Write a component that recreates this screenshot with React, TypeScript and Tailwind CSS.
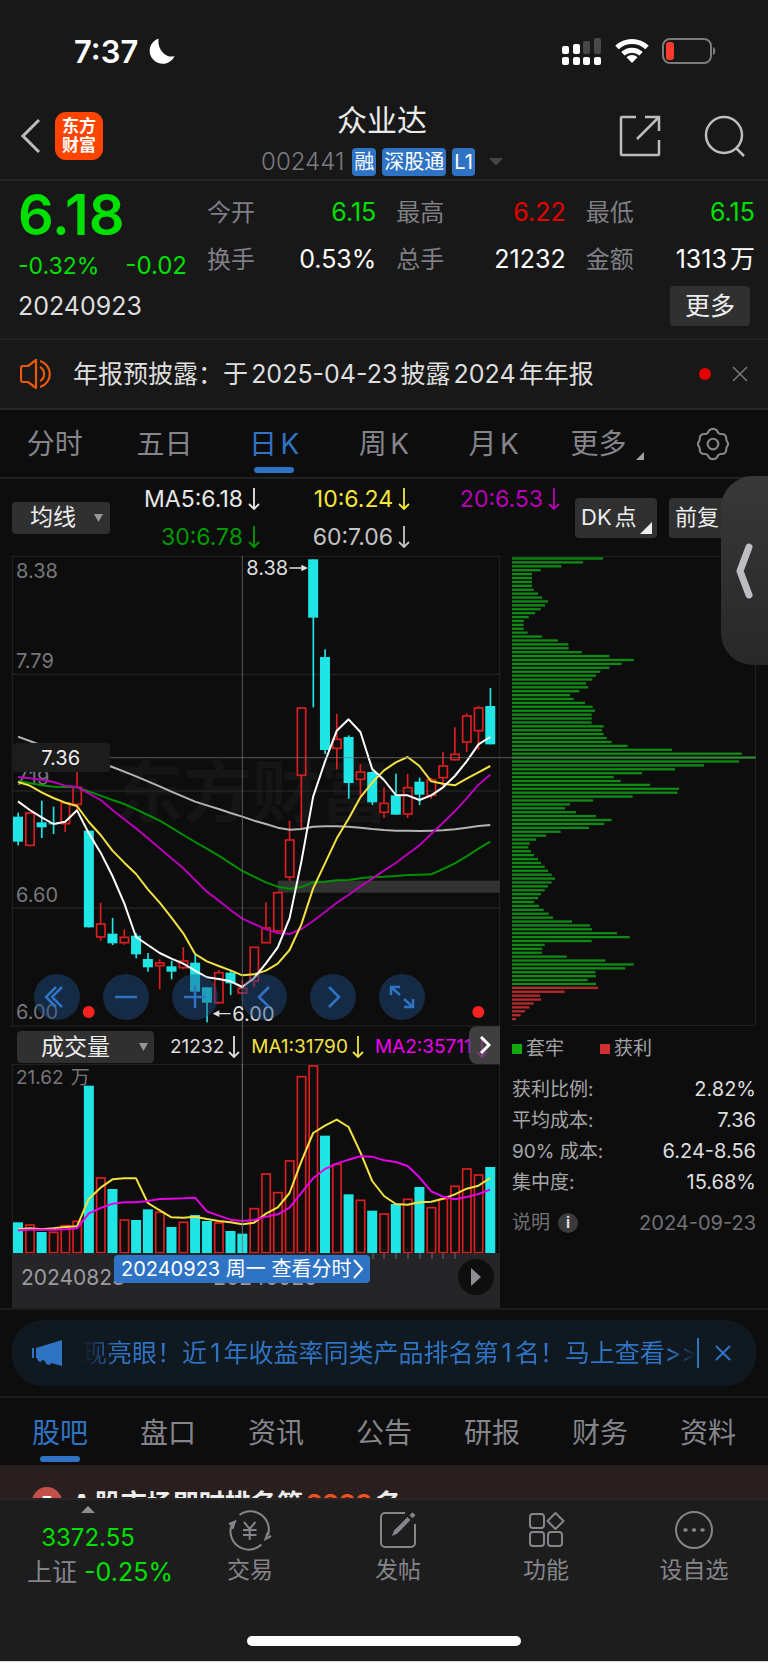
import type { ReactNode } from "react";

// [high, bodyTop, bodyBottom, low, rising]
type Candle = [number, number, number, number, 0 | 1];

const FIRST_X = 54;
const STEP = 35.42;

const candles: Candle[] = [
    [788, 800, 875, 886, 0], [786, 787, 888, 889, 1], [752, 817, 832, 864, 0], [770, 820, 823, 852, 0],
    [757, 757, 823, 846, 1], [640, 710, 765, 780, 1], [842, 842, 1132, 1132, 0], [1058, 1120, 1163, 1172, 1],
    [1104, 1151, 1180, 1185, 0], [1138, 1160, 1180, 1184, 1], [1150, 1157, 1213, 1225, 0], [1209, 1227, 1252, 1265, 0],
    [1228, 1237, 1249, 1318, 1], [1232, 1249, 1265, 1288, 0], [1192, 1231, 1255, 1258, 1], [1215, 1238, 1325, 1330, 0],
    [1312, 1312, 1358, 1417, 0], [1260, 1266, 1360, 1362, 1], [1262, 1268, 1300, 1335, 0], [1290, 1313, 1331, 1333, 1],
    [1190, 1190, 1295, 1312, 1], [1057, 1132, 1180, 1180, 1], [1026, 1026, 1145, 1145, 1], [812, 868, 983, 992, 1],
    [472, 472, 678, 835, 1], [28, 28, 203, 472, 0], [298, 321, 600, 612, 0], [491, 566, 597, 658, 1],
    [556, 561, 699, 746, 0], [642, 664, 690, 738, 1], [664, 666, 757, 765, 0], [712, 758, 789, 804, 1],
    [671, 736, 794, 794, 0], [671, 711, 794, 804, 1], [683, 695, 734, 765, 0], [684, 688, 738, 746, 1],
    [606, 646, 685, 710, 1], [532, 611, 631, 632, 1], [490, 496, 578, 606, 1], [467, 472, 544, 600, 1],
    [414, 468, 583, 583, 0],
];

const ma5 = [754, 780, 802, 822, 815, 781, 850, 908, 978, 1060, 1161, 1185, 1209, 1226, 1241, 1262, 1282, 1287, 1294, 1311, 1284, 1240, 1192, 1105, 935, 740, 635, 542, 508, 546, 657, 690, 735, 736, 750, 736, 712, 678, 634, 583, 561];
const ma10 = [696, 707, 727, 744, 758, 768, 816, 855, 902, 938, 972, 1018, 1058, 1103, 1150, 1212, 1234, 1248, 1261, 1276, 1273, 1262, 1241, 1200, 1123, 1015, 940, 865, 806, 742, 698, 661, 637, 621, 648, 694, 701, 706, 686, 667, 648];
const ma20 = [681, 685, 689, 696, 707, 711, 730, 750, 780, 808, 835, 865, 895, 925, 955, 990, 1025, 1052, 1080, 1106, 1122, 1138, 1149, 1152, 1137, 1113, 1086, 1058, 1035, 1009, 986, 962, 939, 912, 886, 852, 818, 784, 745, 704, 674];
const ma30 = [694, 699, 706, 710, 711, 712, 724, 737, 750, 762, 778, 795, 812, 833, 855, 876, 896, 917, 940, 963, 980, 997, 1010, 1016, 1011, 997, 995, 991, 990, 985, 981, 980, 978, 975, 974, 973, 957, 940, 919, 896, 875];
const ma60 = [560, 573, 586, 597, 608, 618, 629, 640, 651, 665, 679, 694, 709, 725, 740, 755, 766, 777, 789, 800, 812, 822, 833, 839, 837, 830, 829, 829, 830, 833, 837, 840, 842, 842, 843, 842, 841, 838, 833, 828, 825];

// top of each volume bar, same order as the candles
const volumes = [608, 614, 637, 636, 616, 603, 198, 473, 508, 599, 601, 569, 576, 622, 606, 586, 604, 608, 634, 642, 565, 461, 517, 422, 169, 137, 348, 432, 524, 540, 573, 581, 553, 537, 502, 562, 537, 498, 446, 464, 442];
const fallingVolumes = [0, 2, 6, 8, 10, 11, 13, 15, 16, 18, 19, 26, 28, 30, 32, 34, 40];
const volMa1 = [629, 626, 629, 626, 622, 620, 537, 504, 479, 476, 476, 550, 572, 593, 594, 591, 598, 604, 608, 614, 609, 582, 563, 520, 425, 340, 318, 300, 322, 398, 484, 529, 553, 555, 548, 546, 537, 524, 507, 498, 475];
const volMa2 = [632, 630, 630, 630, 629, 626, 581, 565, 552, 548, 548, 544, 538, 537, 536, 534, 575, 588, 600, 604, 601, 591, 584, 564, 520, 476, 448, 432, 420, 410, 411, 422, 427, 439, 473, 515, 531, 539, 532, 523, 510];

const chips = [
    309, 249, 184, 122, 96, 96, 96, 96, 101, 114, 126, 144, 135, 122, 105, 86, 71, 71, 71, 83,
    126, 174, 205, 206, 245, 328, 401, 365, 328, 301, 288, 277, 258, 264, 238, 210, 221, 255, 278, 285,
    275, 275, 275, 311, 306, 311, 320, 335, 383, 516, 725, 767, 717, 612, 525, 426, 341, 362, 450, 537,
    532, 398, 279, 210, 195, 228, 288, 335, 313, 267, 182, 138, 108, 89, 85, 93, 102, 114, 123, 134,
    144, 155, 165, 155, 144, 134, 123, 114, 102, 117, 131, 146, 159, 216, 270, 276, 351, 389, 275, 134,
    126, 126, 200, 316, 401, 376, 286, 288, 263, 288, 294, 194, 120, 123, 101, 88, 75, 62, 48,
];
const FIRST_PROFIT_CHIP = 110;

const xAt = (i: number) => FIRST_X + i * STEP;
const toPoints = (ys: number[]) => ys.map((y, i) => `${xAt(i)},${y}`).join(" ");

const Line = ({ ys, color }: { ys: number[]; color: string }) => (
    <polyline points={toPoints(ys)} fill="none" stroke={color} strokeWidth="6" strokeLinejoin="round" />
);

const StatusBar = () => (
    <div className="flex h-24 items-center justify-between pl-[74px] pr-[52px]">
        <div className="flex items-center gap-[10px] pt-[7px]">
            <span className="text-[31px] leading-8 font-semibold text-white">7:37</span>
            <svg className="h-7 w-7" viewBox="0 0 28 28" fill="#fff">
                <path d="M10.500 .5A13 13 0 1 0 26.600 18 10.600 10.600 0 0 1 14.200 13.800C11.200 10.500 10 5.500 10.500 .5Z" />
            </svg>
        </div>
        <div className="flex items-center gap-[13px] pt-[6px]">
            <svg className="h-7 w-10" viewBox="0 0 40 28" fill="#fff">
                <rect x="0" y="9" width="7" height="8" rx="2" />
                <rect x="11" y="7" width="7" height="10" rx="2" />
                <rect x="21" y="4" width="7" height="13" rx="2" fill="#48484a" />
                <rect x="32" y="1" width="7" height="16" rx="2" fill="#48484a" />
                <rect x="0" y="20" width="7" height="8" rx="2" />
                <rect x="11" y="20" width="7" height="8" rx="2" />
                <rect x="21" y="20" width="7" height="8" rx="2" />
                <rect x="32" y="20" width="7" height="8" rx="2" />
            </svg>
            <svg className="h-7 w-[34px]" viewBox="0 0 34 28" fill="none" stroke="#fff" strokeWidth="5">
                <path d="M2 10.500A21.500 21.500 0 0 1 32 10.500" />
                <path d="M8 16.800A13 13 0 0 1 26 16.800" />
                <path d="M17 26 11.500 20.200A8 8 0 0 1 22.500 20.200Z" fill="#fff" stroke="none" />
            </svg>
            <svg className="h-7 w-[54px]" viewBox="0 0 54 28">
                <rect x="1" y="2" width="48" height="24" rx="7" fill="none" stroke="#7b7b7d" strokeWidth="2" />
                <rect x="4" y="5" width="8" height="18" rx="3" fill="#ff3b30" />
                <path d="M51 10v8c3-1 3-7 0-8Z" fill="#7b7b7d" />
            </svg>
        </div>
    </div>
);

const Tag = ({ children }: { children: ReactNode }) => (
    <span className="rounded bg-[#2f74c4] px-[2px] text-[20px] leading-7 text-white">{children}</span>
);

const Header = () => (
    <header className="flex h-[85px] items-center justify-between border-b-2 border-[#262626] pr-[22px] pl-[20px]">
        <div className="flex w-[125px] items-center gap-[14px] pb-1">
            <button type="button" aria-label="返回">
                <svg className="h-9 w-[21px]" viewBox="0 0 21 36" fill="none" stroke="#bdbdbd" strokeWidth="3">
                    <path d="M19 2 3 18 19 34" />
                </svg>
            </button>
            <div className="grid h-12 w-12 place-content-center rounded-[11px] bg-[#ff4400] text-center text-[17px] leading-[19px] font-bold text-white">
                <span>东方</span>
                <span>财富</span>
            </div>
        </div>
        <div className="text-center">
            <h1 className="text-[30px] leading-[48px] text-[#ebebeb]">众业达</h1>
            <div className="flex items-center gap-[6px] py-1">
                <span className="mr-[2px] text-[24px] leading-7 font-light text-[#7b7b82]">002441</span>
                <Tag>融</Tag>
                <Tag>深股通</Tag>
                <Tag>L1</Tag>
                <svg className="ml-2 h-2 w-[14px]" viewBox="0 0 14 8" fill="#444">
                    <path d="M0 0h14L7 8Z" />
                </svg>
            </div>
        </div>
        <div className="flex w-[127px] justify-between pb-1">
            <button type="button" aria-label="分享">
                <svg className="h-[42px] w-[42px]" viewBox="0 0 42 42" fill="none" stroke="#bdbdbd" strokeWidth="2.500">
                    <path d="M17 2H3a1 1 0 0 0-1 1v36a1 1 0 0 0 1 1h36a1 1 0 0 0 1-1V25" />
                    <path d="M26 2h14v14M40 2 18 24" />
                </svg>
            </button>
            <button type="button" aria-label="搜索">
                <svg className="h-[42px] w-[42px]" viewBox="0 0 42 42" fill="none" stroke="#bdbdbd" strokeWidth="2.500">
                    <circle cx="20" cy="20" r="18" />
                    <path d="m32 33 8 8" />
                </svg>
            </button>
        </div>
    </header>
);

const quoteItems = [
    { label: "今开", value: "6.15", color: "text-[#00e000]" },
    { label: "最高", value: "6.22", color: "text-[#e60000]" },
    { label: "最低", value: "6.15", color: "text-[#00e000]" },
    { label: "换手", value: "0.53%", color: "text-white" },
    { label: "总手", value: "21232", color: "text-white" },
    { label: "金额", value: "1313万", color: "text-white" },
];

const Quote = () => (
    <section className="border-b-2 border-[#202020] pr-[13px] pb-3 pl-[18px]">
        <div className="flex">
            <div className="w-[189px] shrink-0 text-[#00e000]">
                <div className="text-[56px] leading-[68px] font-semibold">6.18</div>
                <div className="flex items-center justify-between pr-5 leading-[34px]">
                    <span className="text-[23px]">-0.32%</span>
                    <span className="text-[24px]">-0.02</span>
                </div>
            </div>
            <dl className="grid grow grid-cols-3 gap-x-5 pt-2 text-[24px] leading-[47px]">
                {quoteItems.map((item) => (
                    <div key={item.label} className="flex justify-between">
                        <dt className="text-[#7f7f85]">{item.label}</dt>
                        <dd className={`text-[25px] ${item.color}`}>{item.value}</dd>
                    </div>
                ))}
            </dl>
        </div>
        <div className="flex items-center justify-between pt-[3px] pr-[5px]">
            <span className="text-[25px] leading-10 text-[#dedede]">20240923</span>
            <button type="button" className="h-10 w-20 rounded bg-[#303031] text-[25px] leading-10 text-[#ededed]">
                更多
            </button>
        </div>
    </section>
);

const Notice = () => (
    <section className="flex h-[70px] items-center border-b-2 border-[#262626] pr-5 pl-5">
        <svg className="mr-[19px] h-8 w-[34px] shrink-0" viewBox="0 0 34 32" fill="none" stroke="#e8590c" strokeWidth="2.200">
            <path d="M3 8h5l8-6v28l-8-6H3a2 2 0 0 1-2-2V10a2 2 0 0 1 2-2Z" strokeLinejoin="round" />
            <path d="M20 9a8 8 0 0 1 0 14M20 3a13.500 13.500 0 0 1 0 26" />
        </svg>
        <p className="grow truncate text-[25px] leading-9 text-[#dedede]">年报预披露：于2025-04-23披露2024年年报</p>
        <span className="mr-[21px] h-3 w-3 shrink-0 rounded-full bg-[#e60000]" />
        <button type="button" aria-label="关闭">
            <svg className="h-4 w-4" viewBox="0 0 16 16" stroke="#77777c" strokeWidth="1.500">
                <path d="m1 1 14 14M15 1 1 15" />
            </svg>
        </button>
    </section>
);

const periods = ["分时", "五日", "日K", "周K", "月K"];

const PeriodTabs = () => (
    <nav className="grid h-[69px] grid-cols-7 border-b-2 border-[#222] text-[28px] text-[#85858b]">
        {periods.map((name) => (
            <button
                key={name}
                type="button"
                className={`flex flex-col items-center pt-3 leading-[45px] ${name === "日K" ? "text-[#2f74c4]" : ""}`}
            >
                {name}
                {name === "日K" && <span className="h-[6px] w-10 rounded-full bg-[#2f74c4]" />}
            </button>
        ))}
        <button type="button" className="flex items-start justify-center gap-[10px] pt-3 pl-2 leading-[45px]">
            更多
            <svg className="mt-[30px] h-2 w-2" viewBox="0 0 8 8" fill="#a0a0a5">
                <path d="M8 0v8H0Z" />
            </svg>
        </button>
        <button type="button" aria-label="设置" className="grid place-items-center">
            <svg className="h-[34px] w-[34px]" viewBox="0 0 32 32" fill="none" stroke="#85858b" strokeWidth="2">
                <path
                    strokeLinejoin="round"
                    d="M12.500 3Q16 .5 19.500 3L21 5.500Q22 6.800 24 6.600 28 6.500 28.500 10.500 28.300 12.300 29.200 13.500 31.200 16 29.200 18.500 28.300 19.700 28.500 21.500 28 25.500 24 25.400 22 25.200 21 26.500L19.500 29Q16 31.500 12.500 29L11 26.500Q10 25.200 8 25.400 4 25.500 3.500 21.500 3.700 19.700 2.800 18.500 .8 16 2.800 13.500 3.700 12.300 3.500 10.500 4 6.500 8 6.600 10 6.800 11 5.500Z"
                />
                <circle cx="16" cy="16" r="5" />
            </svg>
        </button>
    </nav>
);

const DownArrow = () => (
    <svg className="inline-block h-[22px] w-3" viewBox="0 0 12 22" fill="none" stroke="currentColor" strokeWidth="1.800">
        <path d="M6 0v21M1 16l5 5 5-5" />
    </svg>
);

const SmallTriangle = () => (
    <svg className="h-2 w-[9px]" viewBox="0 0 9 8" fill="#97979b">
        <path d="M0 0h9L4.500 8Z" />
    </svg>
);

const averages = [
    { text: "MA5:6.18", color: "text-[#e8e8e8]" },
    { text: "10:6.24", color: "text-[#f5e63c]" },
    { text: "20:6.53", color: "text-[#b800b8]" },
    { text: "30:6.78", color: "text-[#009a00]" },
    { text: "60:7.06", color: "text-[#c4c4c4]" },
];

const AverageBar = () => (
    <div className="relative flex h-[77px] items-center pl-3">
        <button type="button" className="flex h-8 w-[98px] items-center justify-between rounded bg-[#303031] pr-[7px] pl-[18px] text-[23px] text-[#ededed]">
            均线
            <SmallTriangle />
        </button>
        <div className="grid w-[450px] grid-cols-3 text-[23px] leading-[38px]">
            {averages.map((item) => (
                <span key={item.text} className={`flex items-center justify-end gap-[5px] ${item.color}`}>
                    {item.text}
                    <DownArrow />
                </span>
            ))}
        </div>
        <button type="button" className="relative ml-[15px] h-10 w-[82px] rounded bg-[#303031] pl-[6px] text-left text-[22px] text-[#ededed]">
            DK点
            <svg className="absolute right-[5px] bottom-[4px] h-3 w-3" viewBox="0 0 12 12" fill="#ededed">
                <path d="M12 0v12H0Z" />
            </svg>
        </button>
        <button type="button" className="ml-3 h-10 grow rounded bg-[#303031] pl-[6px] text-left text-[22px] text-[#ededed]">
            前复
        </button>
        <button
            type="button"
            aria-label="展开侧栏"
            className="absolute top-[-3px] right-0 z-20 grid h-[189px] w-[47px] place-items-center rounded-l-[32px] bg-gradient-to-b from-[#383838] to-[#282828]"
        >
            <svg className="h-14 w-6" viewBox="0 0 24 56" fill="none" stroke="#bdbdc2" strokeWidth="7" strokeLinecap="round" strokeLinejoin="round">
                <path d="M16 4 7 28l9 24" />
            </svg>
        </button>
    </div>
);

const axisLabels = [
    { y: 83, text: "8.38" },
    { y: 353, text: "7.79" },
    { y: 705, text: "7.19" },
    { y: 1056, text: "6.60" },
    { y: 1408, text: "6.00" },
];

const CandleChart = () => (
    <svg className="pointer-events-none relative z-10 block w-full overflow-visible" viewBox="36 18 1464 1410">
        <text x="345" y="800" fontSize="205" fontWeight="700" fill="#151515">东方财富</text>
        <path d="M37 373H1500M37 723H1500M37 1074H1500" stroke="#222" strokeWidth="4" />
        <rect x="37" y="19" width="1462" height="1409" fill="none" stroke="#242424" strokeWidth="3" />
        <rect x="833" y="992" width="666" height="36" fill="#333" />
        <g fontSize="60" fill="#77777b">
            {axisLabels.map((label) => (
                <text key={label.text} x="48" y={label.y}>{label.text}</text>
            ))}
        </g>
        {candles.map(([high, top, bottom, low, rising], i) =>
            rising ? (
                <g key={i} fill="none" stroke="#dc1e1e" strokeWidth="5">
                    <path d={`M${xAt(i)} ${high}V${top}M${xAt(i)} ${bottom}V${low}`} />
                    <rect x={xAt(i) - 12} y={top + 2} width="25" height={Math.max(bottom - top - 4, 4)} />
                </g>
            ) : (
                <g key={i} fill="#20e5e5">
                    <rect x={xAt(i) - 2} y={high} width="5" height={low - high} />
                    <rect x={xAt(i) - 15} y={top} width="30" height={bottom - top} />
                </g>
            )
        )}
        <Line ys={ma60} color="#b4b4b4" />
        <Line ys={ma30} color="#008f00" />
        <Line ys={ma20} color="#b800b8" />
        <Line ys={ma10} color="#f2e240" />
        <Line ys={ma5} color="#fff" />
        <path d="M727 18V1542M36 623H1536" stroke="#77777b" strokeWidth="3" strokeOpacity="0.700" />
        <rect x="38" y="579" width="292" height="87" rx="10" fill="#1c1c1d" />
        <text x="182" y="645" fontSize="60" fill="#ededed" textAnchor="middle">7.36</text>
        <g fontSize="60" fill="#dedede">
            <text x="739" y="76">8.38</text>
            <path d="M868 52h36v-8l20 10-20 10v-8h-36Z" />
            <text x="697" y="1412">6.00</text>
            <path d="M692 1389h-34v-8l-20 10 20 10v-8h34Z" />
        </g>
        <circle cx="266" cy="1386" r="18" fill="#f52222" />
        <circle cx="1435" cy="1386" r="18" fill="#f52222" />
    </svg>
);

const controls = [
    { label: "最早", path: "M22 13 12 23l10 10M28 13 18 23l10 10" },
    { label: "缩小", path: "M12 23h22" },
    { label: "放大", path: "M12 23h22M23 12v22" },
    { label: "左移", path: "M28 13 18 23l10 10" },
    { label: "右移", path: "M19 13l10 10-10 10" },
    { label: "全屏", path: "M12 21v-8h9M12 13l9 8M34 25v8h-9M34 33l-9-8" },
];

const ChartControls = () => (
    <div className="absolute bottom-[6px] left-[22px] z-20 flex gap-[23px]">
        {controls.map((item) => (
            <button key={item.label} type="button" aria-label={item.label} className="h-[46px] w-[46px] rounded-full bg-[#1e4e87]/45">
                <svg viewBox="0 0 46 46" fill="none" stroke="#2f74c4" strokeWidth="2.500">
                    <path d={item.path} />
                </svg>
            </button>
        ))}
    </div>
);

const VolumeBar = () => (
    <div className="relative flex h-[38px] items-center overflow-hidden pt-1 pl-[5px] text-[19px] whitespace-nowrap">
        <button type="button" className="mr-4 flex h-8 w-[137px] shrink-0 items-center justify-between rounded bg-[#303031] pr-[6px] pl-6 text-[23px] text-[#ededed]">
            成交量
            <SmallTriangle />
        </button>
        <span className="mr-[11px] flex items-center gap-1 text-[#dedede]">21232<DownArrow /></span>
        <span className="mr-[11px] flex items-center gap-1 text-[#f2e240]">MA1:31790<DownArrow /></span>
        <span className="flex items-center gap-1 text-[#f000f0]">MA2:35711<DownArrow /></span>
        <button type="button" aria-label="更多指标" className="absolute top-0 right-0 grid h-full w-[31px] place-items-center rounded-l-lg bg-[#505052]/75">
            <svg className="h-[18px] w-3" viewBox="0 0 12 18" fill="none" stroke="#fff" strokeWidth="3">
                <path d="m2 1 8 8-8 8" />
            </svg>
        </button>
    </div>
);

const VolumeChart = () => (
    <svg className="block w-full overflow-visible" viewBox="36 133 1464 568">
        <path d="M37 701V134H1499V701" fill="none" stroke="#242424" strokeWidth="3" />
        <text x="48" y="194" fontSize="57" fill="#77777b">21.62万</text>
        {volumes.map((top, i) =>
            fallingVolumes.includes(i) ? (
                <rect key={i} x={xAt(i) - 15} y={top} width="30" height={701 - top} fill="#20e5e5" />
            ) : (
                <rect key={i} x={xAt(i) - 12} y={top + 2} width="25" height={697 - top} fill="none" stroke="#dc1e1e" strokeWidth="5" />
            )
        )}
        <Line ys={volMa1} color="#f2e240" />
        <Line ys={volMa2} color="#e600e6" />
        <path d="M727 133V701" stroke="#77777b" strokeWidth="3" />
    </svg>
);

const DateAxis = () => (
    <div className="relative flex h-[55px] items-center bg-[#252527] pb-[6px] text-[21px] text-[#9b9b9f]">
        <span className="pl-[9px]">20240823</span>
        <span className="pl-[88px]">20240925</span>
        <svg className="absolute top-0 left-[360px] h-[6px] w-[90px]" viewBox="0 0 90 6" stroke="#6c6c70">
            <path d="M1 0v6M12 0v6M24 0v6M36 0v6M48 0v6M60 0v6M71 0v6M83 0v6" />
        </svg>
        <button type="button" className="absolute top-[2px] left-[102px] flex h-7 items-center rounded bg-[#2f74c4] px-[7px] text-[20px] whitespace-nowrap text-white">
            20240923 周一 查看分时
            <svg className="ml-[2px] h-5 w-[10px]" viewBox="0 0 10 20" fill="none" stroke="#fff" strokeWidth="2">
                <path d="m1 1 8 9-8 9" />
            </svg>
        </button>
        <button type="button" aria-label="播放" className="absolute top-[6px] right-[6px] grid h-9 w-9 place-items-center rounded-full bg-[#0e0e0e]">
            <svg className="h-[18px] w-[10px]" viewBox="0 0 10 18" fill="#8e8e92">
                <path d="M0 0v18l10-9Z" />
            </svg>
        </button>
    </div>
);

const ChipChart = () => (
    <svg className="block w-full" viewBox="36 18 732 1410">
        <path d="M36 19H767V1427H36" fill="none" stroke="#242424" strokeWidth="3" />
        {chips.map((end, i) => (
            <rect key={i} x="36" y={22 + i * 11.71} width={end - 36} height="7" fill={i < FIRST_PROFIT_CHIP ? "#0f8a14" : "#b32b2b"} />
        ))}
        <path d="M36 623H768" stroke="#77777b" strokeWidth="3" strokeOpacity="0.700" />
    </svg>
);

const chipStats = [
    { label: "获利比例:", value: "2.82%" },
    { label: "平均成本:", value: "7.36" },
    { label: "90% 成本:", value: "6.24-8.56" },
    { label: "集中度:", value: "15.68%" },
];

const ChipStats = () => (
    <div className="pt-[9px] text-[19px]">
        <div className="flex gap-9 leading-7 text-[#a5a5a8]">
            <span className="flex items-center gap-1"><i className="h-[10px] w-[10px] bg-[#12a812]" />套牢</span>
            <span className="flex items-center gap-1"><i className="h-[10px] w-[10px] bg-[#d03030]" />获利</span>
        </div>
        <dl className="pt-[11px] leading-[31px]">
            {chipStats.map((item) => (
                <div key={item.label} className="flex justify-between">
                    <dt className="text-[#a5a5a8]">{item.label}</dt>
                    <dd className="text-[20px] text-[#dedede]">{item.value}</dd>
                </div>
            ))}
        </dl>
        <div className="flex items-center pt-[11px] leading-7 text-[#717175]">
            <span>说明</span>
            <span className="ml-2 grid h-5 w-5 place-items-center rounded-full bg-[#3a3a3c] text-[15px] leading-5 font-bold text-[#dedede]">i</span>
            <span className="ml-auto text-[20px]">2024-09-23</span>
        </div>
    </div>
);

const Promo = () => (
    <section className="border-y-2 border-[#1c1c1c] px-3 py-[10px]">
        <div className="flex h-[66px] items-center rounded-[30px] bg-[#101820] pr-[25px] pl-5 text-[#2f74c4]">
            <svg className="h-[26px] w-[30px] shrink-0" viewBox="0 0 30 26" fill="currentColor">
                <path d="M0 8h2v10H0ZM4 8 30 0v26l-11-3-1 2-4-1-1-3-3-1-1 2-3-1-1-3H4Z" />
            </svg>
            <div className="ml-5 min-w-0 grow overflow-hidden text-[25px] leading-9 whitespace-nowrap [mask-image:linear-gradient(to_right,transparent,#000_36px,#000_calc(100%-28px),transparent)]">
                现亮眼！近1年收益率同类产品排名第1名！马上查看&gt;&gt;
            </div>
            <span className="h-[30px] w-[2px] shrink-0 bg-[#2f74c4]" />
            <button type="button" aria-label="关闭广告" className="ml-4 shrink-0">
                <svg className="h-4 w-4" viewBox="0 0 16 16" stroke="currentColor" strokeWidth="2">
                    <path d="m1 1 14 14M15 1 1 15" />
                </svg>
            </button>
        </div>
    </section>
);

const sections = ["股吧", "盘口", "资讯", "公告", "研报", "财务", "资料"];

const SectionTabs = () => (
    <nav className="grid h-[67px] grid-cols-7 px-[6px] text-[28px] text-[#85858b]">
        {sections.map((name, i) => (
            <button key={name} type="button" className={`flex flex-col items-center pt-3 leading-[46px] ${i === 0 ? "text-[#2f74c4]" : ""}`}>
                {name}
                {i === 0 && <span className="h-[6px] w-10 rounded-full bg-[#2f74c4]" />}
            </button>
        ))}
    </nav>
);

const RankStrip = () => (
    <div className="flex h-[33px] items-start overflow-hidden bg-[#2a1f1f] pl-8">
        <span className="mt-[22px] grid h-[30px] w-[30px] shrink-0 place-items-center rounded-full bg-[#c4504c] text-[16px] font-bold text-white">7</span>
        <p className="mt-[21px] ml-[10px] shrink-0 text-[26px] leading-9 font-bold text-[#ededed]">
            A股市场即时排名第<span className="text-[#f0501e]">2239</span>名 <span className="text-[#77777b]">›</span>
        </p>
    </div>
);

const navItems: { label: string; icon: ReactNode }[] = [
    {
        label: "交易",
        icon: (
            <>
                <path d="M9.500 5A18.300 18.300 0 0 1 38 25M41 26l-5.500 3L38 22M31.500 34.500A18.300 18.300 0 0 1 2.500 13M-1 14l6-2.500L2.500 19" />
                <path d="m14 12 5.700 7 5.700-7M19.700 19v11M13 20h13.500M13 25h13.500" />
            </>
        ),
    },
    {
        label: "发帖",
        icon: (
            <>
                <path d="M27 3H7a4 4 0 0 0-4 4v26a4 4 0 0 0 4 4h26a4 4 0 0 0 4-4V14" />
                <path d="m14 26 2-5.500L29.500 7l3 3L19.500 23.500ZM31.500 5.300l3-3 3 3-3 3Z" fill="currentColor" stroke="none" />
            </>
        ),
    },
    {
        label: "功能",
        icon: (
            <>
                <rect x="4" y="4" width="14" height="14" rx="3" />
                <rect x="4" y="22" width="14" height="14" rx="3" />
                <rect x="22" y="22" width="14" height="14" rx="3" />
                <path d="m29.500 3 8 8-8 8-8-8Z" strokeLinejoin="round" />
            </>
        ),
    },
    {
        label: "设自选",
        icon: (
            <>
                <circle cx="20" cy="20" r="18" />
                <path d="M11 20h1M19.500 20h1M28 20h1" strokeWidth="3.500" strokeLinecap="round" />
            </>
        ),
    },
];

const BottomNav = () => (
    <footer className="border-t-2 border-[#262626] bg-[#1d1d1d]">
        <div className="flex h-[136px] pt-[6px]">
            <div className="flex w-[176px] shrink-0 flex-col items-center text-[24px] text-[#00e000]">
                <svg className="h-[7px] w-[14px]" viewBox="0 0 14 7" fill="#909094">
                    <path d="M7 0 14 7H0Z" />
                </svg>
                <span className="pt-2 leading-[34px]">3372.55</span>
                <span className="pl-6 text-[25px] leading-[34px] whitespace-nowrap"><span className="text-[#85858b]">上证</span> -0.25%</span>
            </div>
            {navItems.map((item) => (
                <button key={item.label} type="button" className="flex flex-1 flex-col items-center gap-1 pt-1 text-[23px] leading-[32px] text-[#85858b]">
                    <svg className="h-10 w-10 overflow-visible" viewBox="0 0 40 40" fill="none" stroke="currentColor" strokeWidth="2">
                        {item.icon}
                    </svg>
                    {item.label}
                </button>
            ))}
        </div>
        <div className="mx-auto h-[10px] w-[274px] rounded-full bg-white" />
        <div className="h-4 border-b border-[#dedede]" />
    </footer>
);

export default function App() {
    return (
        <div className="overflow-hidden bg-[#0d0d0d] font-['Inter','Noto_Sans_CJK_SC',sans-serif] [text-autospace:normal]">
            <div className="bg-[#181818]">
                <StatusBar />
                <Header />
                <Quote />
                <Notice />
            </div>
            <PeriodTabs />
            <AverageBar />
            <main className="grid grid-cols-[2fr_1fr] gap-x-3 px-3">
                <div className="min-w-0">
                    <div className="relative">
                        <CandleChart />
                        <ChartControls />
                    </div>
                    <VolumeBar />
                    <VolumeChart />
                    <DateAxis />
                </div>
                <div className="min-w-0">
                    <ChipChart />
                    <ChipStats />
                </div>
            </main>
            <Promo />
            <SectionTabs />
            <RankStrip />
            <BottomNav />
        </div>
    );
}
